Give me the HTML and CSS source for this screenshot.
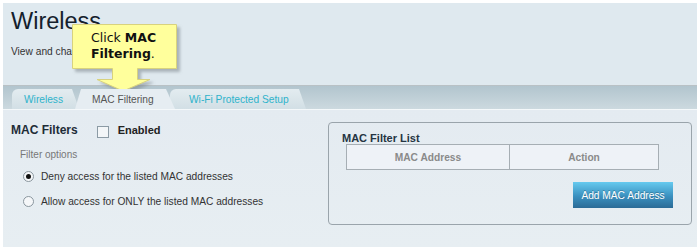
FILE: index.html
```html
<!DOCTYPE html>
<html lang="en">
  <head>
    <meta charset="UTF-8" />
    <title>Wireless</title>
    <link rel="stylesheet" href="styles.css">
  </head>
  <body>
    <div class="panel">
      <div class="header">
        <h1>Wireless</h1>
        <p class="subtitle">View and change router settings</p>
      </div>

      <div class="callout">
        <svg class="callout-shape" width="112" height="72" viewBox="0 0 112 72">
          <defs>
            <filter id="shadow" x="-10%" y="-10%" width="130%" height="130%">
              <feDropShadow dx="3" dy="3" stdDeviation="1.5" flood-color="#7c858c" flood-opacity="0.55" />
            </filter>
          </defs>
          <path d="M0.5 0.5 H104.5 V44.5 H65.5 V55.5 H78 L51 67 L25 55.5 H40.5 V44.5 H0.5 Z"
                fill="#ffff9c" stroke="#d8d27e" stroke-width="1" filter="url(#shadow)" />
        </svg>
        <div class="callout-text">Click <b>MAC<br>Filtering</b>.</div>
      </div>

      <div class="tabbar">
        <div class="tab tab-first">Wireless</div>
        <div class="tab tab-active">MAC Filtering</div>
        <div class="tab tab-last">Wi-Fi Protected Setup</div>
      </div>

      <div class="content">
        <div class="left">
          <div class="filters-row">
            <span class="section-title">MAC Filters</span>
            <span class="checkbox"></span>
            <span class="enabled">Enabled</span>
          </div>
          <div class="options-label">Filter options</div>
          <label class="radio-row">
            <span class="radio checked"></span>
            Deny access for the listed MAC addresses
          </label>
          <label class="radio-row">
            <span class="radio"></span>
            Allow access for ONLY the listed MAC addresses
          </label>
        </div>

        <div class="list-box">
          <div class="list-title">MAC Filter List</div>
          <table class="mac-table">
            <tr>
              <th class="col-mac">MAC Address</th>
              <th>Action</th>
            </tr>
          </table>
          <div class="actions">
            <button class="add-btn">Add MAC Address</button>
          </div>
        </div>
      </div>
    </div>
  </body>
</html>
```

FILE: styles.css
```css
body {
  margin: 0;
  background-color: white;
  font-family: "Liberation Sans", Arial, sans-serif;
}
.panel {
  position: relative;
  margin: 3px 2px 0 3px;
  height: 244px;
  background-color: #dfe9ef;
  overflow: hidden;
}
.header {
  height: 82px;
  padding: 7px 8px 0 8px;
  box-sizing: border-box;
}
h1 {
  margin: 0;
  font-size: 23.5px;
  line-height: 23px;
  font-weight: normal;
  color: #14202c;
}
.subtitle {
  margin: 12px 0 0 0;
  font-size: 10.2px;
  line-height: 13px;
  color: #333;
}
.callout {
  position: absolute;
  left: 69px;
  top: 21px;
  width: 112px;
  height: 72px;
}
.callout-shape {
  display: block;
}
.callout-text {
  position: absolute;
  left: 19px;
  top: 6px;
  font-family: "DejaVu Sans", Verdana, sans-serif;
  font-size: 12.5px;
  line-height: 16px;
  color: #111;
}
.tabbar {
  display: flex;
  align-items: flex-end;
  height: 23px;
  padding-left: 9px;
  border-top: 1px solid #b9c1c5;
  border-bottom: 1px solid #f4f8fa;
  background: linear-gradient(to bottom, #b2c5ce, #ccd9df);
}
.tab {
  height: 20px;
  line-height: 21px;
  font-size: 10.2px;
  color: #2eb3cb;
  box-sizing: border-box;
  border-top-left-radius: 6px;
  background: linear-gradient(to bottom, #e3ecf0, #d2dfe5);
  clip-path: polygon(0 0, calc(100% - 7px) 0, 100% 100%, 0 100%);
}
.tab-first {
  width: 67px;
  padding-left: 12px;
}
.tab-active {
  position: relative;
  z-index: 1;
  width: 100px;
  margin-left: -4px;
  padding-left: 17px;
  color: #555;
  border-top-left-radius: 0;
  background: #e6edf2;
  clip-path: polygon(6px 0, calc(100% - 9px) 0, 100% 100%, 0 100%);
}
.tab-last {
  width: 136px;
  margin-left: -5px;
  padding-left: 19px;
}
.content {
  display: flex;
  height: 137px;
  padding: 12px 0 0 8px;
  box-sizing: border-box;
  background: linear-gradient(to bottom, #e4ebf1, #e7eef2);
}
.left {
  width: 317px;
}
.filters-row {
  display: flex;
  align-items: center;
  height: 16px;
}
.section-title {
  font-size: 12px;
  font-weight: bold;
  color: #1e2c38;
}
.checkbox {
  width: 10px;
  height: 10px;
  margin: 3px 0 0 19px;
  border: 1px solid #8c9ba5;
  background-color: #f3f6f8;
}
.enabled {
  margin-left: 9px;
  font-size: 11px;
  font-weight: bold;
  color: #222;
}
.options-label {
  margin: 10px 0 0 9px;
  font-size: 10px;
  line-height: 13px;
  color: #777;
}
.radio-row {
  display: flex;
  align-items: center;
  margin: 6px 0 0 12px;
  height: 18px;
  font-size: 10.2px;
  color: #333;
}
.radio-row + .radio-row {
  margin-top: 7px;
}
.radio {
  width: 9px;
  height: 9px;
  margin-right: 7px;
  border: 1px solid #8a969e;
  border-radius: 50%;
  background-color: #f5f7f9;
  position: relative;
}
.radio.checked::after {
  content: "";
  position: absolute;
  left: 2px;
  top: 2px;
  width: 5px;
  height: 5px;
  border-radius: 50%;
  background-color: #111;
}
.list-box {
  width: 364px;
  height: 103px;
  box-sizing: border-box;
  padding: 9px 0 0 13px;
  border: 1px solid #9aa4ab;
  border-radius: 4px;
}
.list-title {
  font-size: 11px;
  font-weight: bold;
  line-height: 12px;
  color: #243442;
}
.mac-table {
  margin-left: 4px;
  width: 313px;
  border-collapse: collapse;
  background-color: #eef2f7;
}
.mac-table th {
  height: 24px;
  padding: 0;
  border: 1px solid #a6aeb4;
  font-size: 10.2px;
  color: #8a8a8a;
}
.col-mac {
  width: 162px;
}
.actions {
  display: flex;
  justify-content: flex-end;
  padding-right: 18px;
  margin-top: 12px;
}
.add-btn {
  width: 100px;
  height: 26px;
  padding: 0;
  border: none;
  font-family: "Liberation Sans", Arial, sans-serif;
  font-size: 10.2px;
  color: white;
  text-shadow: 0 -1px 0 rgba(0, 0, 0, 0.25);
  background: linear-gradient(to bottom, #66caef, #3a90bf 55%, #2b6b96);
}
```
